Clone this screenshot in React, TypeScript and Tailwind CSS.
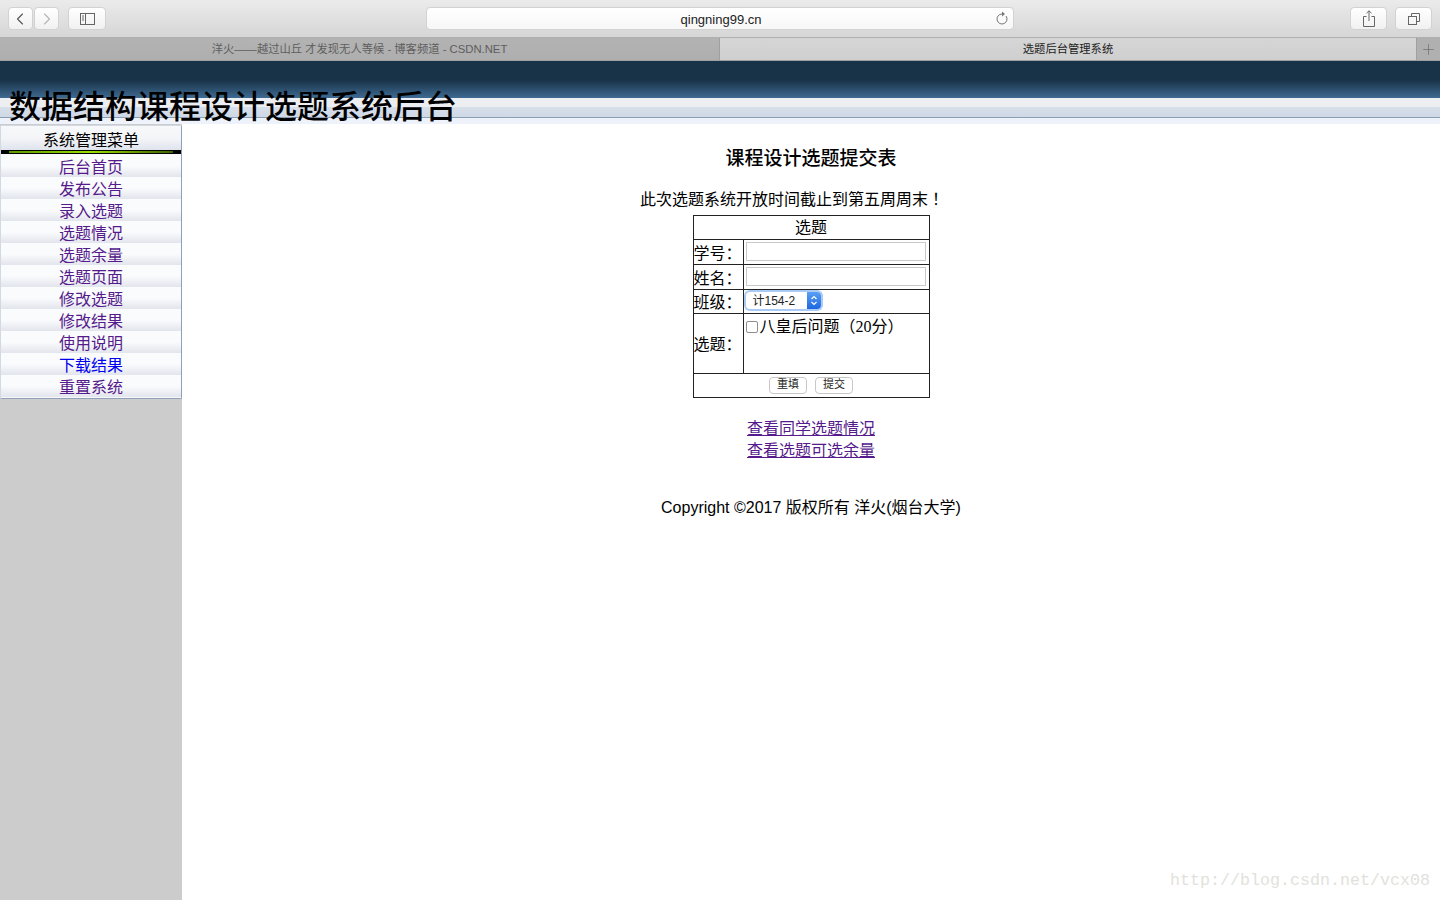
import { ChevronLeft, ChevronRight, Plus } from "lucide-react";

const menu = [
  { label: "后台首页" },
  { label: "发布公告" },
  { label: "录入选题" },
  { label: "选题情况" },
  { label: "选题余量" },
  { label: "选题页面" },
  { label: "修改选题" },
  { label: "修改结果" },
  { label: "使用说明" },
  { label: "下载结果", fresh: true },
  { label: "重置系统" },
];

const serif = "font-['Liberation_Serif','Noto_Sans_CJK_SC',serif]";

const ToolButton = ({ className, children }: { className: string; children: React.ReactNode }) => (
  <div className={`h-[23px] rounded-[4px] border border-[#d2d2d2] bg-gradient-to-b from-[#ffffff] to-[#f1f1f1] flex items-center justify-center ${className}`}>
    {children}
  </div>
);

const SafariBar = () => (
  <div className="font-['Liberation_Sans','Noto_Sans_CJK_SC',sans-serif]">
    {/* TOOLBAR */}
    <div className="h-[38px] flex items-center pl-[8px] pr-[8px] bg-gradient-to-b from-[#ebebeb] to-[#d6d6d6] border-b border-[#b0b0b0]">
      <ToolButton className="w-[25px] pr-[2px]"><ChevronLeft size={20} strokeWidth={1.3} className="text-[#555]" /></ToolButton>
      <ToolButton className="w-[25px] ml-[1px]"><ChevronRight size={20} strokeWidth={1.3} className="text-[#b5b5b5]" /></ToolButton>
      <ToolButton className="w-[38px] ml-[9px]">
        <svg width="15" height="12" viewBox="0 0 15 12" fill="none" stroke="#666">
          <rect x="0.5" y="0.5" width="14" height="11" />
          <line x1="5.5" y1="0.5" x2="5.5" y2="11.5" />
          <line x1="2" y1="3" x2="4" y2="3" />
          <line x1="2" y1="5" x2="4" y2="5" />
          <line x1="2" y1="7" x2="4" y2="7" />
        </svg>
      </ToolButton>
      <div className="relative ml-[320px] w-[588px] h-[23px] pt-[2px] pl-[2px] rounded-[4px] border border-[#d2d2d2] bg-gradient-to-b from-[#ffffff] to-[#f7f7f7] flex items-center justify-center text-[13px] text-[#222]">
        qingning99.cn
        <svg width="12" height="14" viewBox="0 0 12 14" fill="none" className="absolute right-[5px] top-[3px]">
          <path d="M10 5A5 5 0 1 1 6 3" stroke="#777" />
          <path d="M6 0.5L9 3L6 5.5Z" fill="#777" />
        </svg>
      </div>
      <div className="flex-1" />
      <ToolButton className="w-[37px]">
        <svg width="12" height="17" viewBox="0 0 12 17" fill="none" stroke="#666">
          <path d="M3.5 6.5H0.5V16.5H11.5V6.5H8.5" />
          <path d="M6 11V0.8M3.5 3.2L6 0.8L8.5 3.2" />
        </svg>
      </ToolButton>
      <ToolButton className="w-[37px] ml-[8px]">
        <svg width="12" height="12" viewBox="0 0 12 12" fill="none" stroke="#666">
          <rect x="0.5" y="3.5" width="8" height="8" />
          <path d="M3.5 3.5V0.5H11.5V8.5H8.5" />
        </svg>
      </ToolButton>
    </div>
    {/* TABS */}
    <div className="h-[23px] flex text-[11.3px] leading-[23px] border-b border-[#9f9f9f]">
      <div className="w-[720px] text-center text-[#5e5e5e] bg-gradient-to-b from-[#b3b3b3] to-[#aeaeae] border-r border-[#9f9f9f]">
        洋火——越过山丘 才发现无人等候 - 博客频道 - CSDN.NET
      </div>
      <div className="flex-1 text-center text-[#222] bg-gradient-to-b from-[#d6d6d6] to-[#cfcfcf]">选题后台管理系统</div>
      <div className="w-[24px] flex items-center justify-center bg-[#b0b0b0] border-l border-[#a0a0a0]">
        <Plus size={17} strokeWidth={0.9} className="text-[#666]" />
      </div>
    </div>
  </div>
);

const Banner = () => (
  <div className="relative h-[63px] bg-[#eef2fa]">
    <div className="h-[37px] bg-gradient-to-b from-[#183247] from-50% to-[#3f6a92]" />
    <div className="h-[9px] bg-[#edeef2]" />
    <div className="h-[11px] bg-gradient-to-b from-[#d7dfea] to-[#cfd8e5] border-b border-[#8a9db3]" />
    <h1 className={`${serif} absolute left-[9px] top-[26px] text-[32px] leading-[40px] font-medium text-black whitespace-nowrap`}>
      数据结构课程设计选题系统后台
    </h1>
  </div>
);

const Sidebar = () => (
  <div className={`${serif} w-[182px] shrink-0 bg-[#cccccc] text-[16px]`}>
    <div className="mt-[1px] rounded-[2px] border border-[#d3d9e3] border-r-[#8fa0b8] border-b-[#8fa0b8] bg-[#f7f8fb] pb-[1px]">
      <div className="h-[24px] leading-[30px] text-center text-black bg-gradient-to-b from-[#f7f8fa] via-[#f4f5f8] to-[#dfe3ec]">系统管理菜单</div>
      <div className="h-[4px] py-[1px] bg-black">
        <div className="h-[2px] mx-[8px] bg-gradient-to-r from-[#5c9a00] via-[#9ade00] to-[#3c6400]" />
      </div>
      <ul className="pt-[1px]">
        {menu.map((item) => (
          <li key={item.label} className="h-[22px] leading-[26px] text-center bg-gradient-to-b from-[#fafbfd] from-50% to-[#e2e5ec]">
            <a className={item.fresh ? "text-[#0000ee]" : "text-[#551a8b]"}>{item.label}</a>
          </li>
        ))}
      </ul>
    </div>
  </div>
);

const cell = "border border-[#222]";

const TopicForm = () => (
  <table className="mx-auto w-[237px] border-collapse text-[16px] leading-[18px] text-black">
    <tbody>
      <tr className="h-[24px]">
        <td colSpan={2} className={`${cell} text-center`}>选题</td>
      </tr>
      <tr className="h-[25px]">
        <td className={`${cell} w-[50px] pt-[4px] text-left`}>学号：</td>
        <td className={`${cell} pl-[2px] pr-[3px] pb-[2px]`}><input className="block w-full h-[19px] border border-[#c8c8c8] bg-white" /></td>
      </tr>
      <tr className="h-[25px]">
        <td className={`${cell} pt-[4px] text-left`}>姓名：</td>
        <td className={`${cell} pl-[2px] pr-[3px] pb-[2px]`}><input className="block w-full h-[19px] border border-[#c8c8c8] bg-white" /></td>
      </tr>
      <tr className="h-[24px]">
        <td className={`${cell} pt-[2px] text-left`}>班级：</td>
        <td className={`${cell} px-[2px] pb-[2px]`}>
          <div className="w-[75px] h-[17px] rounded-[4px] bg-white flex items-center ring-2 ring-[#a9cbf6] font-['Liberation_Sans','Noto_Sans_CJK_SC',sans-serif] text-[12px] text-[#222]">
            <span className="flex-1 pl-[7px] text-left">计154-2</span>
            <span className="w-[14px] h-full rounded-r-[4px] bg-gradient-to-b from-[#5aa0f5] to-[#1c66e0] flex items-center justify-center">
              <svg width="8" height="11" viewBox="0 0 8 11" fill="none" stroke="#fff" strokeWidth="1.2">
                <path d="M1.5 4L4 1.5L6.5 4M1.5 7L4 9.5L6.5 7" />
              </svg>
            </span>
          </div>
        </td>
      </tr>
      <tr className="h-[60px]">
        <td className={`${cell} pt-[2px] text-left`}>选题：</td>
        <td className={`${cell} align-top px-[2px] pt-[4px]`}>
          <div className="flex items-center">
            <span className="w-[12px] h-[12px] rounded-[2px] border border-[#8f8f8f] bg-white shrink-0" />
            <span className="ml-[2px]">八皇后问题（20分）</span>
          </div>
        </td>
      </tr>
      <tr className="h-[24px]">
        <td colSpan={2} className={cell}>
          <div className="flex justify-center gap-[8px] font-['Liberation_Sans','Noto_Sans_CJK_SC',sans-serif] text-[11px]">
            <button className="w-[38px] h-[17px] pb-[2px] leading-[13px] rounded-[4px] border border-[#c8c8c8] bg-white text-[#222]">重填</button>
            <button className="w-[38px] h-[17px] pb-[2px] leading-[13px] rounded-[4px] border border-[#c8c8c8] bg-white text-[#222]">提交</button>
          </div>
        </td>
      </tr>
    </tbody>
  </table>
);

const App = () => (
  <div className="h-[900px] overflow-hidden flex flex-col bg-white">
    <SafariBar />
    <Banner />
    <div className="flex flex-1 relative">
      <Sidebar />
      <div className={`${serif} flex-1 text-center text-black pt-[23px]`}>
        <h2 className="text-[19px] leading-[24px] font-medium">课程设计选题提交表</h2>
        <p className="mt-[20px] pr-[38px] text-[16px] leading-[18px] font-['Liberation_Serif','Noto_Sans_CJK_TC',serif]">此次选题系统开放时间截止到第五周周末！</p>
        <div className="mt-[6px]"><TopicForm /></div>
        <div className="mt-[20px] text-[16px] leading-[22px] text-[#551a8b] underline">
          <div>查看同学选题情况</div>
          <div>查看选题可选余量</div>
        </div>
        <p className="mt-[35px] text-[16px] leading-[22px] font-['Liberation_Sans','Noto_Sans_CJK_SC',sans-serif]">Copyright ©2017 版权所有 洋火(烟台大学)</p>
      </div>
      <div className="absolute right-[10px] bottom-[8px] font-['Liberation_Mono',monospace] text-[16.67px] leading-[22px] text-[#e2e2dc]">http://blog.csdn.net/vcx08</div>
    </div>
  </div>
);

export default App;
